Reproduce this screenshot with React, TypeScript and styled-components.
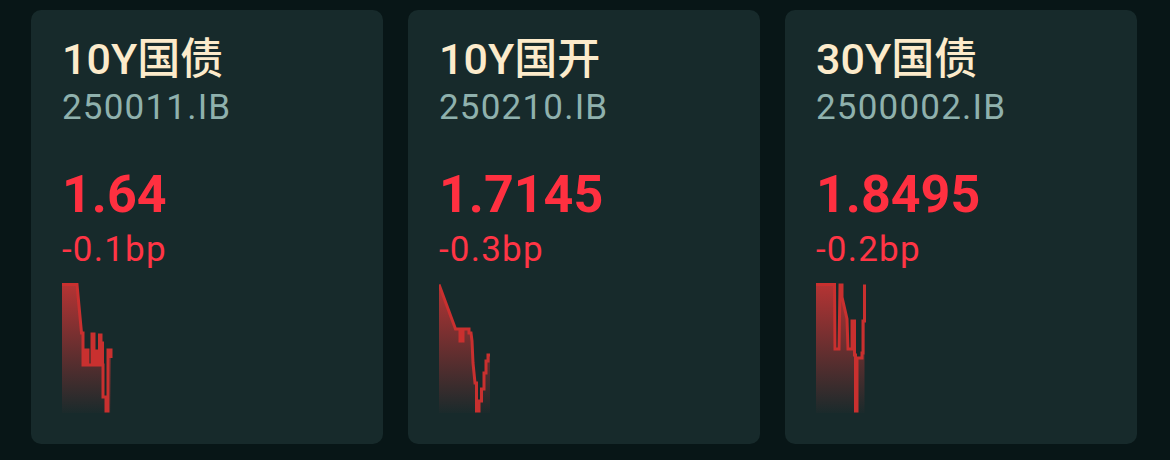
import React from "react";
import styled, { createGlobalStyle } from "styled-components";

type Bond = {
  name: string;
  code: string;
  yieldValue: string;
  change: string;
  points: [number, number][];
};

const CHART_W = 52;
const CHART_H = 130;

const bonds: Bond[] = [
  {
    name: "10Y国债",
    code: "250011.IB",
    yieldValue: "1.64",
    change: "-0.1bp",
    points: [
      [0, 1.5], [15, 1.5], [19.5, 50], [21, 50], [21, 82], [24, 82], [24, 67],
      [26, 67], [26, 82], [30, 82], [30, 51], [32, 51], [32, 82], [34, 82],
      [34, 68], [36, 68], [36, 82], [37.5, 82], [37.5, 52], [39, 52], [39, 60],
      [40.5, 60], [40.5, 82], [41, 82], [41, 114], [44, 114], [44, 128],
      [46, 128], [46, 67], [49, 67], [49, 75],
    ],
  },
  {
    name: "10Y国开",
    code: "250210.IB",
    yieldValue: "1.7145",
    change: "-0.3bp",
    points: [
      [0, 1.5], [16.5, 46], [21, 46], [21, 58], [24, 58], [24, 46], [30, 46],
      [30, 50], [32, 50], [33, 58], [34, 80], [36, 100], [37.5, 100],
      [37.5, 128], [40, 128], [40, 118], [42.5, 118], [42.5, 106], [45, 106],
      [45, 90], [47, 90], [47, 78], [49, 78], [49, 72], [51, 72],
    ],
  },
  {
    name: "30Y国债",
    code: "2500002.IB",
    yieldValue: "1.8495",
    change: "-0.2bp",
    points: [
      [0, 1.5], [18.5, 1.5], [19, 66], [23, 66], [24, 2], [26, 2], [26, 14],
      [31, 36], [32, 66], [36, 66], [36, 38], [38.5, 38], [38.5, 72],
      [39.5, 72], [39.5, 128], [41, 128], [41, 75], [46, 75], [46, 70],
      [47, 70], [47, 38], [48.5, 38], [48.5, 1.5],
    ],
  },
];

const GlobalStyle = createGlobalStyle`
  body {
    margin: 0;
    background: #081617;
    font-family: Roboto, "Noto Sans CJK SC", sans-serif;
  }
`;

const Row = styled.div`
  display: flex;
  gap: 25px;
  padding: 10px 31px;
`;

const Card = styled.div`
  width: 352px;
  height: 434px;
  box-sizing: border-box;
  padding: 24px 31px 0;
  background: #172a2b;
  border-radius: 10px;
  display: flex;
  flex-direction: column;
`;

const Title = styled.div`
  font-size: 43px;
  line-height: 50px;
  font-weight: 500;
  color: #fcebcb;
`;

const Code = styled.div`
  font-size: 35px;
  line-height: 48px;
  letter-spacing: 1.2px;
  color: #8fb1ad;
`;

const Price = styled.div`
  margin-top: 33px;
  font-size: 52px;
  line-height: 60px;
  font-weight: 700;
  color: #ff3040;
`;

const Change = styled.div`
  font-size: 35px;
  line-height: 50px;
  letter-spacing: 1.2px;
  color: #ff3545;
`;

const Chart = styled.svg`
  display: block;
  margin-top: 8px;
`;

const Spark = ({ id, points }: { id: string; points: [number, number][] }) => {
  const line = points.map(([x, y], i) => `${i ? "L" : "M"}${x} ${y}`).join(" ");
  const last = points[points.length - 1];
  const area = `${line} L${last[0]} ${CHART_H} L0 ${CHART_H} Z`;
  return (
    <Chart width={CHART_W} height={CHART_H} viewBox={`0 0 ${CHART_W} ${CHART_H}`}>
      <defs>
        <linearGradient id={id} x1="0" y1="0" x2="0" y2="1">
          <stop offset="0" stopColor="#bd3434" stopOpacity="0.95" />
          <stop offset="1" stopColor="#bd3434" stopOpacity="0.02" />
        </linearGradient>
      </defs>
      <path d={area} fill={`url(#${id})`} />
      <path d={line} fill="none" stroke="#c9302f" strokeWidth="3" strokeLinejoin="miter" />
    </Chart>
  );
};

const App = () => (
  <>
    <GlobalStyle />
    <Row>
      {bonds.map((b, i) => (
        <Card key={b.code}>
          <Title>{b.name}</Title>
          <Code>{b.code}</Code>
          <Price>{b.yieldValue}</Price>
          <Change>{b.change}</Change>
          <Spark id={`spark-${i}`} points={b.points} />
        </Card>
      ))}
    </Row>
  </>
);

export default App;
